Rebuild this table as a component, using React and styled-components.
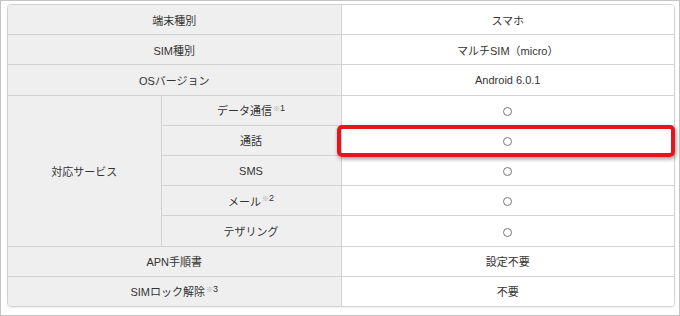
import React from 'react';
import styled, { createGlobalStyle } from 'styled-components';

const GlobalStyle = createGlobalStyle`
  html, body {
    margin: 0;
    padding: 0;
    background: #fff;
  }
  body {
    font-family: "Liberation Sans", "Noto Sans CJK JP", sans-serif;
  }
`;

const Frame = styled.div`
  position: relative;
  box-sizing: border-box;
  width: 680px;
  height: 316px;
  border: 1px solid #c4c4c4;
  padding: 3px 6px 0 6px;
  background: #fff;
`;

const Sheet = styled.div`
  width: 666px;
  border: 1px solid #d2d2d2;
  border-radius: 4px;
  overflow: hidden;
  box-shadow: 0 1px 2px rgba(0, 0, 0, 0.08);
`;

const Table = styled.table`
  width: 100%;
  border-collapse: collapse;
  table-layout: fixed;
  font-size: 11px;
  color: #333;
`;

const Cell = styled.td`
  height: 29.2px;
  padding: 0;
  text-align: center;
  vertical-align: middle;
  border: 1px solid #d2d2d2;
  background: ${(p) => (p.$head ? '#efefef' : '#fff')};
  tr:first-child > & { border-top: none; }
  tr:last-child > & { border-bottom: none; }
  &:first-child { border-left: none; }
  &:last-child { border-right: none; }
`;

const Note = styled.sup`
  font-size: 9px;
  line-height: 0;
  margin-left: 1px;
  .mark {
    color: #aaa;
    font-size: 7px;
  }
`;

const Circle = styled.span`
  display: inline-block;
  width: 7px;
  height: 7px;
  border: 1px solid #777;
  border-radius: 50%;
  vertical-align: middle;
`;

// red callout drawn over the 通話 row
const Highlight = styled.div`
  position: absolute;
  left: 336px;
  top: 124px;
  width: 330px;
  height: 24px;
  border: 4px solid #e8141c;
  border-radius: 5px;
  box-shadow: 1px 2px 4px rgba(0, 0, 0, 0.4);
  pointer-events: none;
`;

const Sup = ({ n }) => (
  <Note>
    <span className='mark'>※</span>
    {n}
  </Note>
);

const services = [
  { label: <>データ通信<Sup n={1} /></> },
  { label: '通話' },
  { label: 'SMS' },
  { label: <>メール<Sup n={2} /></> },
  { label: 'テザリング' },
];

const App = () => (
  <>
    <GlobalStyle />
    <Frame>
      <Sheet>
        <Table>
          <colgroup>
            <col style={{ width: 153 }} />
            <col style={{ width: 180 }} />
            <col />
          </colgroup>
          <tbody>
            <tr>
              <Cell $head colSpan={2}>端末種別</Cell>
              <Cell>スマホ</Cell>
            </tr>
            <tr>
              <Cell $head colSpan={2}>SIM種別</Cell>
              <Cell>マルチSIM（micro）</Cell>
            </tr>
            <tr>
              <Cell $head colSpan={2}>OSバージョン</Cell>
              <Cell>Android 6.0.1</Cell>
            </tr>
            {services.map((s, i) => (
              <tr key={i}>
                {i === 0 && (
                  <Cell $head rowSpan={services.length}>対応サービス</Cell>
                )}
                <Cell $head>{s.label}</Cell>
                <Cell><Circle /></Cell>
              </tr>
            ))}
            <tr>
              <Cell $head colSpan={2}>APN手順書</Cell>
              <Cell>設定不要</Cell>
            </tr>
            <tr>
              <Cell $head colSpan={2}>SIMロック解除<Sup n={3} /></Cell>
              <Cell>不要</Cell>
            </tr>
          </tbody>
        </Table>
      </Sheet>
      <Highlight />
    </Frame>
  </>
);

export default App;
